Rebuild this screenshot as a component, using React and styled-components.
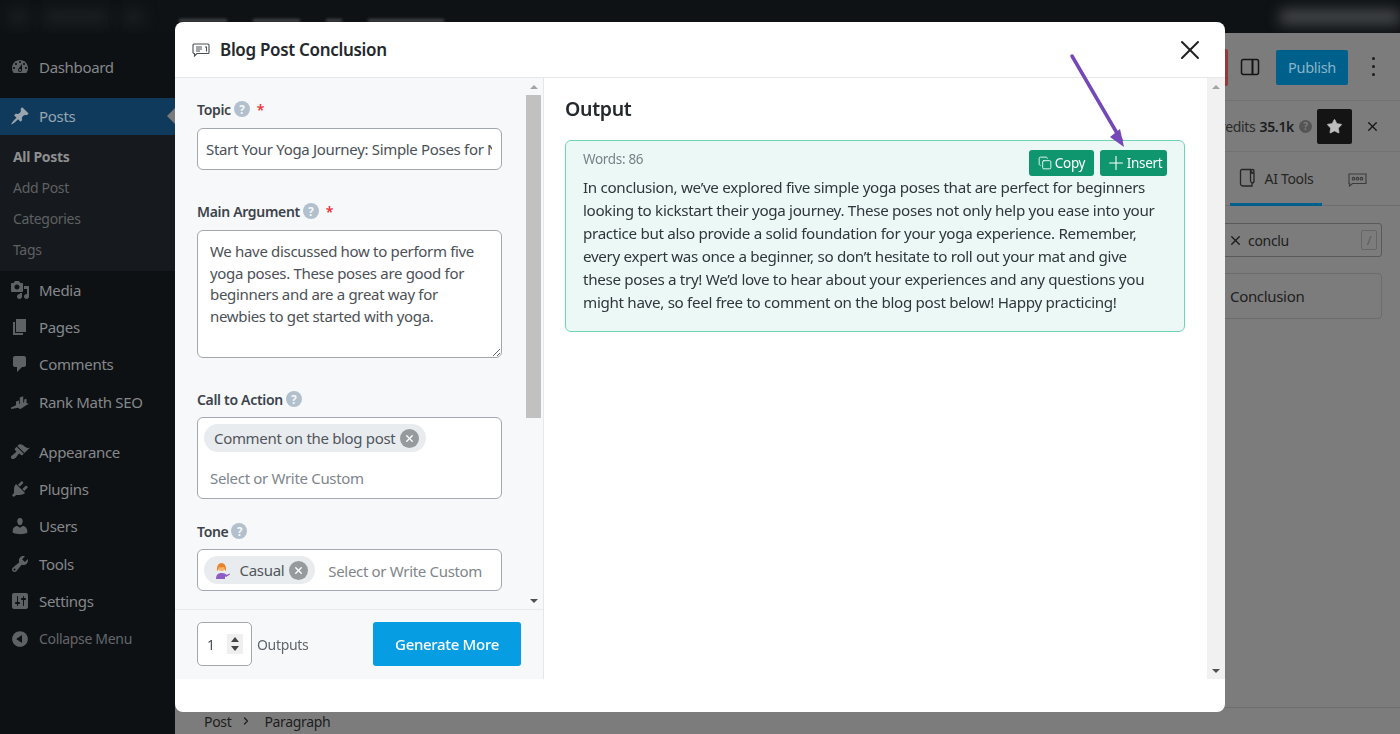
import React from 'react';
import styled, {createGlobalStyle} from 'styled-components';
import {ChevronRight, Copy, Plus, X, Star} from 'lucide-react';

const GlobalStyle = createGlobalStyle`
  * { box-sizing: border-box; }
  html, body { margin: 0; height: 100%; overflow: hidden; }
  body {
    font-family: 'Noto Sans', 'Open Sans', sans-serif;
    letter-spacing: -0.02em;
    background: #7c7c7c;
  }
`;

const Page = styled.div`
  width: 1400px;
  height: 734px;
  display: flex;
  flex-direction: column;
`;
const TopBar = styled.div`
  height: 33px;
  flex: none;
  background: #0f1215;
  display: flex;
  align-items: center;
  padding-left: 10px;
  gap: 16px;
  overflow: hidden;
`;
const Blob = styled.div`
  width: ${p => p.$w}px;
  height: 14px;
  margin-left: ${p => p.$left || 0}px;
  background: ${p => p.$c || '#1d2023'};
  filter: blur(7px);
`;
const PeekText = styled.div`
  margin-left: ${p => p.$left}px;
  align-self: flex-end;
  margin-bottom: 11px;
  width: ${p => p.$w}px;
  height: 3px;
  background: #45484b;
  filter: blur(1.5px);
`;
const Main = styled.div`
  flex: 1;
  display: flex;
  min-height: 0;
`;

const Sidebar = styled.nav`
  width: 175px;
  flex: none;
  background: #0e1114;
  padding-top: 15px;
`;
const MenuRow = styled.div`
  height: ${p => (p.$active ? 37 : 37.4)}px;
  margin-bottom: ${p => (p.$gap ? 12.5 : 0)}px;
  display: flex;
  align-items: center;
  padding-left: 10px;
  position: relative;
  font-size: ${p => (p.$muted ? 14 : 15)}px;
  color: ${p => (p.$active ? '#9aa5ae' : p.$muted ? '#63666a' : '#85888b')};
  background: ${p => (p.$active ? '#0f3a5c' : 'transparent')};
  svg { width: 20px; height: 20px; fill: ${p => (p.$active ? '#9aa5ae' : '#5f6265')}; flex: none; margin-right: 9px; }
  ${p => p.$active && `
    &::after {
      content: '';
      position: absolute;
      right: 0;
      top: 10px;
      border: 8px solid transparent;
      border-right-color: #7a7b7c;
      border-left-width: 0;
    }
  `}
`;
const SubMenu = styled.div`
  background: #16191d;
  padding: 6.5px 0;
`;
const SubItem = styled.div`
  height: 30.75px;
  display: flex;
  align-items: center;
  padding-left: 13px;
  font-size: 14px;
  font-weight: ${p => (p.$current ? 700 : 400)};
  color: ${p => (p.$current ? '#8d8f91' : '#5e6163')};
`;

const Editor = styled.div`
  flex: 1;
  min-width: 0;
  display: flex;
  flex-direction: column;
  background: #7c7c7c;
  color: #1c1c1c;
`;
const EditorHeader = styled.header`
  height: 68px;
  flex: none;
  display: flex;
  align-items: center;
  justify-content: flex-end;
  border-bottom: 1px solid #727272;
  padding-right: 20px;
`;
const SaveButton = styled.div`
  width: 80px;
  height: 37px;
  margin-top: 2px;
  background: #94393b;
  border-radius: 2px;
  margin-right: 12px;
`;
const PanelIcon = styled.svg`
  width: 20px;
  height: 20px;
  margin-right: 16px;
`;
const PublishButton = styled.div`
  width: 72px;
  height: 35px;
  margin-top: 1px;
  background: #00608c;
  border-radius: 2px;
  color: #8ab4c8;
  font-size: 14.5px;
  display: flex;
  align-items: center;
  justify-content: center;
  margin-right: 24px;
`;
const Kebab = styled.div`
  width: 4px;
  display: flex;
  flex-direction: column;
  gap: 5px;
  margin-right: 4px;
  i { width: 3px; height: 3px; border-radius: 50%; background: #1c1c1c; }
`;
const EditorBody = styled.div`
  flex: 1;
  display: flex;
  justify-content: flex-end;
  min-height: 0;
`;
const SettingsPanel = styled.aside`
  width: 300px;
  display: flex;
  flex-direction: column;
`;
const CreditsRow = styled.div`
  height: 51px;
  flex: none;
  border-bottom: 1px solid #727272;
  display: flex;
  align-items: center;
  justify-content: flex-end;
  padding-right: 20px;
  font-size: 14px;
  color: #2b2b2b;
  b { font-weight: 600; margin-left: 4px; color: #1c1c1c; }
`;
const CreditHelp = styled.span`
  width: 13px;
  height: 13px;
  border-radius: 50%;
  background: #555;
  color: #7c7c7c;
  font-size: 10px;
  font-weight: 700;
  display: flex;
  align-items: center;
  justify-content: center;
  margin: 0 5px 0 5px;
`;
const StarButton = styled.div`
  width: 35px;
  height: 35px;
  background: #141414;
  border-radius: 2px;
  color: #bdbdbd;
  display: flex;
  align-items: center;
  justify-content: center;
  margin-right: 13px;
`;
const TabsRow = styled.div`
  height: 54px;
  flex: none;
  display: flex;
  justify-content: flex-end;
  padding-right: 8px;
  border-bottom: 1px solid #6f6f6f;
`;
const Tab = styled.div`
  width: ${p => p.$w}px;
  height: 54px;
  display: flex;
  align-items: center;
  justify-content: center;
  gap: 9px;
  padding-top: 1px;
  font-size: 14px;
  color: #252525;
  border-bottom: ${p => (p.$active ? '3px solid #00608c' : 'none')};
`;
const SearchBox = styled.div`
  height: 34px;
  margin: 17px 18px 0 20px;
  flex: none;
  border: 1px solid #5a5a5a;
  border-radius: 3px;
  display: flex;
  align-items: center;
  padding-left: 107px;
  font-size: 14px;
  color: #202020;
  svg { margin-right: 5px; }
`;
const SlashKey = styled.span`
  margin-left: auto;
  margin-right: 4px;
  width: 16px;
  height: 20px;
  border: 1px solid #666;
  border-radius: 2px;
  color: #5c5c5c;
  font-size: 13px;
  display: flex;
  align-items: center;
  justify-content: center;
`;
const ToolCard = styled.div`
  height: 46px;
  margin: 16px 18px 0 20px;
  flex: none;
  border: 1px solid #6c6c6c;
  border-radius: 4px;
  display: flex;
  align-items: center;
  padding-left: 109px;
  font-size: 15px;
  color: #202020;
`;
const StatusBar = styled.footer`
  height: 27px;
  flex: none;
  border-top: 1px solid #6e6e6e;
  display: flex;
  align-items: center;
  padding-left: 29px;
  font-size: 14px;
  color: #1e1e1e;
  svg { margin: 0 12px 0 9px; }
`;

const ModalLayer = styled.div`
  position: fixed;
  inset: 0;
  padding: 22px 175px;
  display: flex;
`;
const Modal = styled.div`
  flex: 1;
  background: #fff;
  border-radius: 8px;
  padding-bottom: 33px;
  display: flex;
  flex-direction: column;
  overflow: hidden;
`;
const ModalHeader = styled.div`
  height: 56px;
  flex: none;
  border-bottom: 1px solid #e5e7eb;
  display: flex;
  align-items: center;
  padding: 0 19px 0 17px;
`;
const ModalTitle = styled.h2`
  margin: 0 0 0 10px;
  font-size: 17px;
  font-weight: 600;
  color: #23282d;
  flex: 1;
`;
const ModalBody = styled.div`
  flex: 1;
  display: flex;
  min-height: 0;
`;
const LeftColumn = styled.div`
  width: 369px;
  flex: none;
  background: #f7f8fa;
  border-right: 1px solid #e5e7eb;
  display: flex;
  flex-direction: column;
`;
const FormArea = styled.div`
  flex: 1;
  min-height: 0;
  display: flex;
  overflow: hidden;
`;
const Form = styled.div`
  flex: 1;
  min-width: 0;
  padding: 22px 24px 0 22px;
  display: flex;
  flex-direction: column;
`;
const Field = styled.div`
  margin-bottom: ${p => p.$after || 0}px;
`;
const LabelRow = styled.div`
  height: 20px;
  padding-bottom: 2px;
  margin-bottom: ${p => (p.$tight ? 7 : 8)}px;
  display: flex;
  align-items: center;
  font-size: 14px;
  font-weight: 600;
  color: #3c434a;
`;
const Help = styled.span`
  width: 16px;
  height: 16px;
  margin-left: 3px;
  border-radius: 50%;
  background: #b2bfcc;
  color: #f7f8fa;
  font-size: 11.5px;
  font-weight: 700;
  display: flex;
  align-items: center;
  justify-content: center;
`;
const Required = styled.span`
  margin-left: 7px;
  color: #f0303a;
  font-size: 14px;
`;
const TextInput = styled.input`
  display: block;
  width: 100%;
  height: 42px;
  padding: 0 9px 0 8px;
  border: 1px solid #a3a8ae;
  border-radius: 6px;
  background: #fff;
  font: 400 15px 'Noto Sans', sans-serif;
  letter-spacing: inherit;
  color: #4b5157;
  outline: none;
`;
const TextArea = styled.textarea`
  display: block;
  width: 100%;
  height: 128px;
  padding: 10px 12px;
  border: 1px solid #a3a8ae;
  border-radius: 6px;
  background: #fff;
  font: 400 15px/21.5px 'Noto Sans', sans-serif;
  letter-spacing: inherit;
  color: #4b5157;
  outline: none;
  resize: vertical;
`;
const TagBox = styled.div`
  height: ${p => p.$h}px;
  padding: 6px;
  border: 1px solid #a3a8ae;
  border-radius: 6px;
  background: #fff;
  display: flex;
  flex-wrap: wrap;
  align-items: flex-start;
  align-content: flex-start;
  font-size: 15px;
`;
const Chip = styled.span`
  height: 28px;
  padding: 0 7px 0 10px;
  border-radius: 14px;
  background: #e9ecef;
  color: #50565c;
  display: inline-flex;
  align-items: center;
  gap: 5px;
`;
const ChipClose = styled.span`
  width: 19px;
  height: 19px;
  border-radius: 50%;
  background: #979a9c;
  color: #fff;
  display: flex;
  align-items: center;
  justify-content: center;
`;
const Placeholder = styled.span`
  color: #80868c;
  width: ${p => (p.$full ? '100%' : 'auto')};
  padding: ${p => (p.$full ? '16px 0 0 6px' : '5px 0 0 13px')};
  line-height: 20px;
`;
const ScrollTrack = styled.div`
  width: ${p => p.$w}px;
  flex: none;
  padding-right: ${p => p.$inset || 0}px;
  background: ${p => p.$bg};
  display: flex;
  flex-direction: column;
  align-items: center;
`;
const ScrollArrow = styled.div`
  height: 17px;
  flex: none;
  display: flex;
  align-items: center;
  justify-content: center;
  &::before {
    content: '';
    border-left: 4px solid transparent;
    border-right: 4px solid transparent;
    ${p => (p.$down ? 'border-top: 4px solid #505050;' : 'border-bottom: 4px solid #a3a3a3;')}
  }
`;
const ScrollThumb = styled.div`
  width: 100%;
  height: ${p => p.$h}px;
  background: #c1c1c1;
`;
const ScrollSpace = styled.div`
  flex: 1;
`;
const FormFooter = styled.div`
  height: 70px;
  flex: none;
  border-top: 1px solid #e8eaed;
  display: flex;
  align-items: center;
  padding: 0 22px 1px;
  font-size: 14px;
  color: #60666c;
`;
const NumberBox = styled.div`
  width: 55px;
  height: 44px;
  border: 1px solid #a3a8ae;
  border-radius: 5px;
  background: #fff;
  display: flex;
  align-items: center;
  justify-content: space-between;
  padding: 0 8px 0 9px;
  margin-right: 5px;
  color: #4b5157;
`;
const Spinner = styled.div`
  width: 16px;
  height: 20px;
  background: #efefef;
  display: flex;
  flex-direction: column;
  align-items: center;
  justify-content: center;
  gap: 4px;
  i { border-left: 4px solid transparent; border-right: 4px solid transparent; }
  i:first-child { border-bottom: 5px solid #444; }
  i:last-child { border-top: 5px solid #444; }
`;
const GenerateButton = styled.div`
  width: 148px;
  height: 44px;
  margin-left: auto;
  background: #069de3;
  border-radius: 3px;
  color: #fff;
  font-size: 15px;
  font-weight: 500;
  display: flex;
  align-items: center;
  justify-content: center;
`;
const OutputColumn = styled.div`
  flex: 1;
  min-width: 0;
  padding: 17px 22px 0 21px;
`;
const OutputTitle = styled.h3`
  margin: 0 0 18px;
  height: 27px;
  line-height: 27px;
  font-size: 19.5px;
  font-weight: 600;
  color: #24292e;
`;
const OutputCard = styled.div`
  height: 192px;
  background: #ecf8f6;
  border: 1px solid #6fd3b5;
  border-radius: 6px;
  padding: 9px 17px 0 17px;
`;
const OutputTop = styled.div`
  display: flex;
  justify-content: space-between;
  align-items: flex-start;
  height: 26px;
`;
const Words = styled.span`
  font-size: 13.5px;
  line-height: 18px;
  color: #7a8288;
`;
const Actions = styled.div`
  display: flex;
  gap: 6px;
`;
const ActionButton = styled.div`
  height: 26px;
  width: ${p => p.$w}px;
  background: #10966f;
  border-radius: 3px;
  color: #fff;
  font-size: 13.5px;
  display: flex;
  align-items: center;
  justify-content: center;
  gap: ${p => p.$gap}px;
`;
const OutputText = styled.p`
  margin: 0;
  font-size: 15.2px;
  line-height: 23px;
  color: #30363b;
  white-space: nowrap;
`;
const Arrow = styled.svg`
  position: fixed;
  left: 1060px;
  top: 50px;
  width: 75px;
  height: 105px;
  pointer-events: none;
`;

const MENU_ICONS = {
  dashboard: 'M3.76 16h12.48c1.1-1.37 1.76-3.11 1.76-5 0-4.42-3.58-8-8-8s-8 3.58-8 8c0 1.89.66 3.63 1.76 5zM10 4c.55 0 1 .45 1 1s-.45 1-1 1-1-.45-1-1 .45-1 1-1zM6 6c.55 0 1 .45 1 1s-.45 1-1 1-1-.45-1-1 .45-1 1-1zm8 0c.55 0 1 .45 1 1s-.45 1-1 1-1-.45-1-1 .45-1 1-1zm-5.37 5.55L12 7v6c0 1.1-.9 2-2 2s-2-.9-2-2c0-.57.24-1.08.63-1.45zM4 10c.55 0 1 .45 1 1s-.45 1-1 1-1-.45-1-1 .45-1 1-1zm12 0c.55 0 1 .45 1 1s-.45 1-1 1-1-.45-1-1 .45-1 1-1zm-5 3c0-.55-.45-1-1-1s-1 .45-1 1 .45 1 1 1 1-.45 1-1z',
  post: 'M10.44 3.02l1.82-1.82 6.36 6.35-1.83 1.82c-1.05-.68-2.48-.57-3.41.36l-.75.75c-.92.93-1.04 2.35-.35 3.41l-1.83 1.82-2.41-2.41-2.8 2.79c-.42.42-3.38 2.71-3.8 2.29s1.86-3.39 2.28-3.81l2.79-2.79L4.1 9.36l1.83-1.82c1.05.69 2.48.57 3.4-.36l.75-.75c.93-.92 1.05-2.35.36-3.41z',
  media: 'M13 11V4c0-.55-.45-1-1-1h-1.67L9 1H5L3.67 3H2c-.55 0-1 .45-1 1v7c0 .55.45 1 1 1h10c.55 0 1-.45 1-1zM7 4.5c1.38 0 2.5 1.12 2.5 2.5S8.38 9.5 7 9.5 4.5 8.38 4.5 7 5.62 4.5 7 4.5zM14 6h5v10.5c0 1.38-1.12 2.5-2.5 2.5S14 17.88 14 16.5s1.12-2.5 2.5-2.5c.17 0 .34.02.5.05V9h-3V6zm-4 8.05V13h2v3.5c0 1.38-1.12 2.5-2.5 2.5S7 17.88 7 16.5 8.12 14 9.5 14c.17 0 .34.02.5.05z',
  page: 'M6 15V2h10v13H6zm-1 1h8v2H3V5h2v11z',
  comments: 'M5 2h9c1.1 0 2 .9 2 2v7c0 1.1-.9 2-2 2h-2l-5 5v-5H5c-1.1 0-2-.9-2-2V4c0-1.1.9-2 2-2z',
  rank: 'M1 15.5l5-2.2V9.5l3-1v3.6l.8-.3V5.5l3.4-1.2v6.4l1-.4V7.5l2.3-.8v4.2L19 12l-2 .8-6 4-1 .2-2-1.2L1 17z',
  appearance: 'M14.48 11.06L7.41 3.99l1.5-1.5c.5-.56 2.3-.47 3.51.32 1.21.8 1.43 1.28 2.91 2.1 1.18.64 2.45 1.26 4.45.85zm-.71.71L6.7 4.7 4.93 6.47c-.39.39-.39 1.02 0 1.41l1.06 1.06c.39.39.39 1.03 0 1.42-.6.6-1.43 1.11-2.21 1.69-.35.26-.7.53-1.01.84C1.43 13.23.1 15.1 1.5 16.5c1.41 1.41 3.27.07 4.61-1.27.31-.31.58-.66.84-1.01.58-.78 1.09-1.61 1.69-2.21.39-.39 1.02-.39 1.41 0l1.06 1.06c.39.39 1.02.39 1.41 0z',
  plugins: 'M13.11 4.36L9.87 7.6 8 5.73l3.24-3.24c.35-.34 1.05-.2 1.56.32.52.51.66 1.21.31 1.55zm-8 1.77l.91-1.12 9.01 9.01-1.19.84c-.71.71-2.63 1.16-3.82 1.16H6.14L4.9 17.26c-.59.59-1.54.59-2.12 0-.59-.58-.59-1.53 0-2.12l1.24-1.24v-3.88c0-1.13.4-3.19 1.09-3.89zm7.26 3.97l3.24-3.24c.34-.35 1.04-.21 1.55.31.52.51.66 1.21.31 1.55l-3.24 3.25z',
  users: 'M10 9.25c-2.27 0-2.73-3.44-2.73-3.44C7 4.02 7.82 2 9.97 2c2.16 0 2.98 2.02 2.71 3.81 0 0-.41 3.44-2.68 3.44zm0 2.57L12.72 10c2.39 0 4.52 2.33 4.52 4.53v2.49s-3.65 1.13-7.24 1.13c-3.65 0-7.24-1.13-7.24-1.13v-2.49c0-2.25 1.94-4.48 4.47-4.48z',
  tools: 'M16.68 9.77c-1.34 1.34-3.3 1.67-4.95.99l-5.41 6.52c-.99.99-2.59.99-3.58 0s-.99-2.59 0-3.57l6.52-5.42c-.68-1.65-.35-3.61.99-4.95 1.28-1.28 3.12-1.62 4.72-1.06l-2.89 2.89 2.82 2.82 2.86-2.87c.53 1.58.18 3.39-1.08 4.65zM3.81 16.21c.4.39 1.04.39 1.43 0 .4-.4.4-1.04 0-1.43-.39-.4-1.03-.4-1.43 0-.39.39-.39 1.03 0 1.43z',
  settings: 'M18 16V4c0-1.1-.9-2-2-2H4c-1.1 0-2 .9-2 2v12c0 1.1.9 2 2 2h12c1.1 0 2-.9 2-2zM8 11h1c.55 0 1 .45 1 1s-.45 1-1 1H8v1.5c0 .28-.22.5-.5.5s-.5-.22-.5-.5V13H6c-.55 0-1-.45-1-1s.45-1 1-1h1V5.5c0-.28.22-.5.5-.5s.5.22.5.5V11zm5-2h-1c-.55 0-1-.45-1-1s.45-1 1-1h1V5.5c0-.28.22-.5.5-.5s.5.22.5.5V7h1c.55 0 1 .45 1 1s-.45 1-1 1h-1v5.5c0 .28-.22.5-.5.5s-.5-.22-.5-.5V9z',
  collapse: 'M10 2.16c4.33 0 7.84 3.51 7.84 7.84s-3.51 7.84-7.84 7.84S2.16 14.33 2.16 10 5.71 2.16 10 2.16zm2 11.72V6.12L6.18 9.97z',
};

const MenuIcon = ({name}) => (
  <svg viewBox="0 0 20 20">
    <path d={MENU_ICONS[name]} />
  </svg>
);

const MenuItem = ({icon, label, ...rest}) => (
  <MenuRow {...rest}>
    <MenuIcon name={icon} />
    {label}
  </MenuRow>
);

const TitleIcon = () => (
  <svg width="18" height="14" viewBox="0 0 18 14" fill="none" stroke="#4a4f54" strokeWidth="1.1">
    <path d="M2 1h14a1 1 0 0 1 1 1v7.500a1 1 0 0 1-1 1H5L2.500 13v-2.500H2a1 1 0 0 1-1-1V2a1 1 0 0 1 1-1z" />
    <path d="M4 4h6M4 6h6M4 8h4M13 4h1.500v4.500" />
  </svg>
);

const SmallX = ({size = 11, width = 3}) => <X size={size} strokeWidth={width} />;

// no colour emoji font on the box, so the tone glyph is a little drawing
const ToneIcon = () => (
  <svg width="17" height="17" viewBox="0 0 17 17">
    <path d="M2 17c0-4 2-6 5.500-6S12 12 12.500 13l3-1.500.5 1-4 2.500-1-.8V17z" fill="#8e5cc4" />
    <circle cx="7.500" cy="5.500" r="3.500" fill="#f4b26a" />
    <path d="M3 9c-.5-5 1.500-8 4.500-8s5 3 4.500 7.500c-1 1-1.500-2-2-3.500-2 .5-4 .5-5 0-.5 1.500-1 3.500-2 4z" fill="#e8852b" />
  </svg>
);

const AiToolsIcon = () => (
  <svg width="17" height="20" viewBox="0 0 17 20" fill="none" stroke="#252525" strokeWidth="1.3">
    <path d="M3 1.500h8.500v11c0 1 .5 2 1.500 2.500v3H4c-1.500 0-2.500-1-2.500-2.500V3c0-1 .5-1.500 1.500-1.500z" />
    <path d="M11.500 5h3.500v8c0 1.500-1 2-2 2" />
    <circle cx="13.500" cy="3" r="1.500" />
  </svg>
);

const ChatIcon = () => (
  <svg width="19" height="14" viewBox="0 0 19 14" fill="none" stroke="#3c3c3c" strokeWidth="1.100">
    <path d="M1 1h17v9.500H4.500L1.500 13V10.500H1z" />
    <circle cx="5.500" cy="5.700" r="1.300" />
    <circle cx="9.500" cy="5.700" r="1.300" />
    <circle cx="13.500" cy="5.700" r="1.300" />
  </svg>
);

const OUTPUT_LINES = [
  'In conclusion, we’ve explored five simple yoga poses that are perfect for beginners',
  'looking to kickstart their yoga journey. These poses not only help you ease into your',
  'practice but also provide a solid foundation for your yoga experience. Remember,',
  'every expert was once a beginner, so don’t hesitate to roll out your mat and give',
  'these poses a try! We’d love to hear about your experiences and any questions you',
  'might have, so feel free to comment on the blog post below! Happy practicing!',
];

const Scrollbar = ({width, bg, thumb, inset}) => (
  <ScrollTrack $w={width} $bg={bg} $inset={inset}>
    <ScrollArrow />
    {thumb ? <ScrollThumb $h={thumb} /> : null}
    <ScrollSpace />
    <ScrollArrow $down />
  </ScrollTrack>
);

const App = () => (
  <>
    <GlobalStyle />
    <Page>
      <TopBar>
        <Blob $w={22} />
        <Blob $w={80} />
        <Blob $w={24} />
        <PeekText $left={20} $w={60} />
        <PeekText $left={10} $w={58} />
        <PeekText $left={10} $w={20} />
        <PeekText $left={10} $w={95} />
        <Blob $w={150} $c="#4a4c4e" $left={820} />
      </TopBar>
      <Main>
        <Sidebar>
          <MenuItem icon="dashboard" label="Dashboard" $gap />
          <MenuItem icon="post" label="Posts" $active />
          <SubMenu>
            <SubItem $current>All Posts</SubItem>
            <SubItem>Add Post</SubItem>
            <SubItem>Categories</SubItem>
            <SubItem>Tags</SubItem>
          </SubMenu>
          <MenuItem icon="media" label="Media" />
          <MenuItem icon="page" label="Pages" />
          <MenuItem icon="comments" label="Comments" />
          <MenuItem icon="rank" label="Rank Math SEO" $gap />
          <MenuItem icon="appearance" label="Appearance" />
          <MenuItem icon="plugins" label="Plugins" />
          <MenuItem icon="users" label="Users" />
          <MenuItem icon="tools" label="Tools" />
          <MenuItem icon="settings" label="Settings" />
          <MenuItem icon="collapse" label="Collapse Menu" $muted />
        </Sidebar>
        <Editor>
          <EditorHeader>
            <SaveButton />
            <PanelIcon viewBox="0 0 20 20" fill="none" stroke="#141414" strokeWidth="1.500">
              <rect x="1.500" y="2.500" width="17" height="15" rx="2" />
              <path d="M12.500 2.500v15" strokeWidth="2" />
            </PanelIcon>
            <PublishButton>Publish</PublishButton>
            <Kebab>
              <i />
              <i />
              <i />
            </Kebab>
          </EditorHeader>
          <EditorBody>
            <SettingsPanel>
              <CreditsRow>
                Credits <b>35.1k</b>
                <CreditHelp>?</CreditHelp>
                <StarButton>
                  <Star size={17} fill="currentColor" strokeWidth={1} />
                </StarButton>
                <X size={15} strokeWidth={2} color="#141414" />
              </CreditsRow>
              <TabsRow>
                <Tab $w={92} $active>
                  <AiToolsIcon />
                  AI Tools
                </Tab>
                <Tab $w={70}>
                  <ChatIcon />
                </Tab>
              </TabsRow>
              <SearchBox>
                <X size={15} strokeWidth={2.200} color="#1c1c1c" />
                conclu
                <SlashKey>/</SlashKey>
              </SearchBox>
              <ToolCard>Conclusion</ToolCard>
            </SettingsPanel>
          </EditorBody>
          <StatusBar>
            Post
            <ChevronRight size={12} strokeWidth={2.500} />
            Paragraph
          </StatusBar>
        </Editor>
      </Main>
    </Page>

    <ModalLayer>
      <Modal>
        <ModalHeader>
          <TitleIcon />
          <ModalTitle>Blog Post Conclusion</ModalTitle>
          <X size={32} strokeWidth={1.500} color="#1f1f1f" />
        </ModalHeader>
        <ModalBody>
          <LeftColumn>
            <FormArea>
              <Form>
                <Field $after={32}>
                  <LabelRow>
                    Topic<Help>?</Help>
                    <Required>*</Required>
                  </LabelRow>
                  <TextInput readOnly value="Start Your Yoga Journey: Simple Poses for Newbies" />
                </Field>
                <Field $after={32}>
                  <LabelRow>
                    Main Argument<Help>?</Help>
                    <Required>*</Required>
                  </LabelRow>
                  <TextArea
                    readOnly
                    value="We have discussed how to perform five yoga poses. These poses are good for beginners and are a great way for newbies to get started with yoga."
                  />
                </Field>
                <Field $after={23}>
                  <LabelRow $tight>
                    Call to Action<Help>?</Help>
                  </LabelRow>
                  <TagBox $h={82}>
                    <Chip>
                      Comment on the blog post
                      <ChipClose>
                        <SmallX />
                      </ChipClose>
                    </Chip>
                    <Placeholder $full>Select or Write Custom</Placeholder>
                  </TagBox>
                </Field>
                <Field>
                  <LabelRow $tight>
                    Tone<Help>?</Help>
                  </LabelRow>
                  <TagBox $h={42}>
                    <Chip>
                      <ToneIcon />
                      &nbsp;Casual
                      <ChipClose>
                        <SmallX />
                      </ChipClose>
                    </Chip>
                    <Placeholder>Select or Write Custom</Placeholder>
                  </TagBox>
                </Field>
              </Form>
              <Scrollbar width={17} bg="#f7f8fa" thumb={323} inset={2} />
            </FormArea>
            <FormFooter>
              <NumberBox>
                1
                <Spinner>
                  <i />
                  <i />
                </Spinner>
              </NumberBox>
              Outputs
              <GenerateButton>Generate More</GenerateButton>
            </FormFooter>
          </LeftColumn>
          <OutputColumn>
            <OutputTitle>Output</OutputTitle>
            <OutputCard>
              <OutputTop>
                <Words>Words: 86</Words>
                <Actions>
                  <ActionButton $w={65} $gap={3}>
                    <Copy size={14} strokeWidth={1.500} />
                    Copy
                  </ActionButton>
                  <ActionButton $w={67} $gap={0}>
                    <Plus size={22} strokeWidth={1.200} />
                    Insert
                  </ActionButton>
                </Actions>
              </OutputTop>
              <OutputText>
                {OUTPUT_LINES.map(line => (
                  <React.Fragment key={line}>
                    {line}
                    <br />
                  </React.Fragment>
                ))}
              </OutputText>
            </OutputCard>
          </OutputColumn>
          <Scrollbar width={18} bg="#f1f1f1" />
        </ModalBody>
      </Modal>
    </ModalLayer>

    <Arrow viewBox="0 0 75 105" fill="#7548b8">
      <path d="M12 6l49 84" stroke="#7548b8" strokeWidth="3.500" strokeLinecap="round" />
      <path d="M50 87l10-8 4 18z" />
    </Arrow>
  </>
);

export default App;
